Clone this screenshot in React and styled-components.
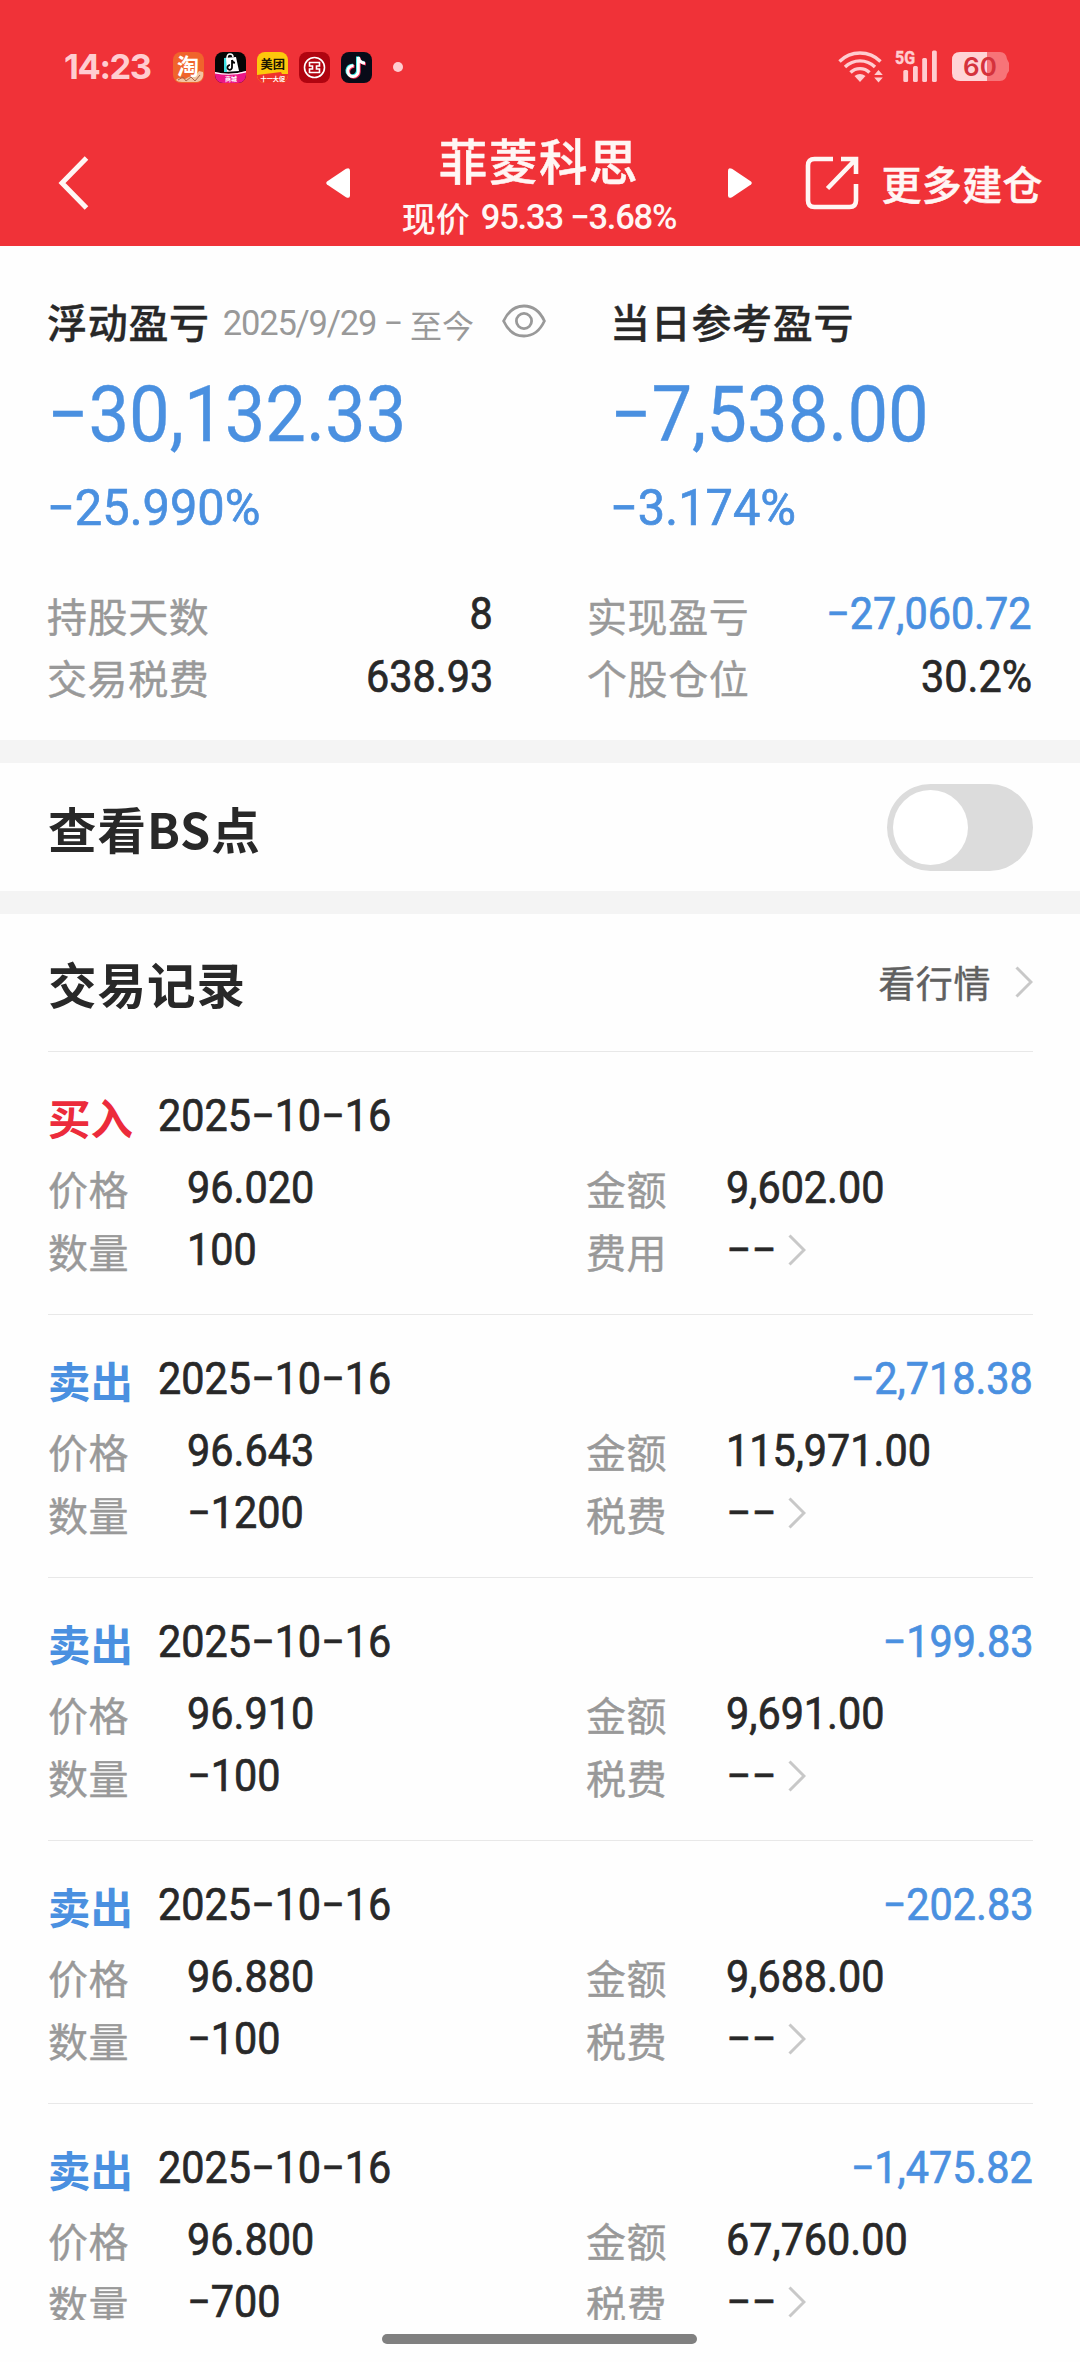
import React, { useState } from "react";
import styled, { createGlobalStyle } from "styled-components";

const GlobalStyle = createGlobalStyle`
  * {
    box-sizing: border-box;
  }
  body {
    margin: 0;
    background: #fefefe;
    font-family: "Noto Sans CJK SC", sans-serif;
    color: #282828;
  }
`;

const Screen = styled.div`
  width: 1080px;
  height: 2362px;
  overflow: hidden;
  display: flex;
  flex-direction: column;
`;

const Content = styled.div`
  height: 2320px;
  flex: none;
  overflow: hidden;
`;

const Num = styled.span`
  display: inline-block;
  font-family: Roboto, "Noto Sans CJK SC", sans-serif;
  font-size: ${({ size }) => size || 44}px;
  font-weight: 400;
  line-height: 1.2;
  white-space: pre;
  color: ${({ tone }) => (tone === "blue" ? "#4a90e0" : "inherit")};
  -webkit-text-stroke: ${({ size }) => (size > 60 ? "0.3px" : "0.7px")};
  transform: scaleX(${({ squeeze }) => squeeze || 0.94});
  transform-origin: ${({ align }) => align || "left"} center;
`;

const SmallNum = styled.span`
  font-family: Roboto, "Noto Sans CJK SC", sans-serif;
  font-size: 34.5px;
  font-weight: ${({ weight }) => weight || 400};
  letter-spacing: -1.2px;
  line-height: 1.2;
  white-space: pre;
`;

/* ---------- header ---------- */

const Header = styled.header`
  height: 246px;
  background: #f03238;
  color: #fff6f4;
`;

const StatusBar = styled.div`
  height: 120px;
  padding: 14px 71px 0 64px;
  display: flex;
  align-items: center;
  color: #ffcdd0;
`;

const Clock = styled.span`
  width: 109px;
  font-family: Inter, sans-serif;
  font-size: 34.5px;
  font-weight: 650;
  letter-spacing: -1.4px;
  line-height: 1.2;
`;

const AppIcons = styled.div`
  display: flex;
  gap: 11px;
`;

const AppIcon = styled.svg`
  width: 31px;
  height: 31px;
  display: block;
`;

const Dot = styled.span`
  width: 10px;
  height: 10px;
  margin-left: 21px;
  border-radius: 50%;
  background: #ffcdd0;
`;

const SignalIcons = styled.svg`
  width: 171px;
  height: 40px;
  margin-left: auto;
`;

const NavBar = styled.div`
  height: 126px;
  padding: 0 37px 0 58px;
  display: grid;
  grid-template-columns: 268px 426px 1fr;
  align-items: center;
`;

const StockSwitch = styled.div`
  display: flex;
  align-items: center;
  justify-content: space-between;
`;

const StockTitle = styled.div`
  padding-top: 4px;
  display: flex;
  flex-direction: column;
  align-items: center;
  gap: 15px;
`;

const StockName = styled.div`
  font-size: 48.5px;
  font-weight: 500;
  letter-spacing: 1.6px;
  line-height: 50px;
  -webkit-text-stroke: 0.5px;
`;

const StockPrice = styled.div`
  height: 38px;
  display: flex;
  align-items: center;
  gap: 11px;
`;

const PriceLabel = styled.span`
  font-size: 34px;
  font-weight: 500;
  line-height: 38px;
`;

const MoreButton = styled.div`
  display: flex;
  align-items: center;
  justify-content: flex-end;
  gap: 22px;
  font-size: 40px;
  font-weight: 500;
  letter-spacing: 0.4px;
  line-height: 1.2;
  -webkit-text-stroke: 0.5px;
`;

/* ---------- summary ---------- */

const Summary = styled.section`
  height: 494px;
  padding: 53px 48px 0 47px;
`;

const ProfitGrid = styled.div`
  display: grid;
  grid-template-columns: 563px 1fr;
`;

const ProfitHead = styled.div`
  height: 44px;
  display: flex;
  align-items: center;
  svg {
    margin-left: 28px;
  }
`;

const ProfitTitle = styled.span`
  font-size: 40px;
  font-weight: 500;
  letter-spacing: 0.7px;
  line-height: 44px;
  -webkit-text-stroke: 0.3px;
`;

const Period = styled.span`
  display: flex;
  align-items: center;
  gap: 8px;
  margin-left: 13px;
  color: #999;
  font-size: 32px;
  line-height: 44px;
  padding-top: 6px;
`;

const PeriodEnd = styled.span`
  line-height: 40px;
`;

const Amount = styled.div`
  height: 80px;
  margin-top: 32px;
  display: flex;
  align-items: center;
`;

const Percent = styled.div`
  height: 60px;
  margin-top: 23px;
  display: flex;
  align-items: center;
`;

const StatGrid = styled.div`
  margin-top: 45.5px;
  display: grid;
  grid-template-columns: 446px 445px;
  grid-auto-rows: 62.5px;
  justify-content: space-between;
`;

const Stat = styled.div`
  display: flex;
  align-items: center;
  justify-content: space-between;
`;

const Label = styled.span`
  font-size: 40px;
  letter-spacing: 0.6px;
  line-height: 1.2;
  color: #999;
  -webkit-text-stroke: 0.4px;
`;

/* ---------- switch row ---------- */

const Band = styled.div`
  height: 23px;
  background: #f4f4f4;
`;

const SwitchRow = styled.section`
  height: 128px;
  padding: 0 47px 0 48px;
  display: flex;
  align-items: center;
  justify-content: space-between;
`;

const SectionTitle = styled.h2`
  margin: 0;
  padding-top: 2px;
  font-size: 48.5px;
  font-weight: 700;
  letter-spacing: 1px;
  line-height: 1.2;
`;

const Toggle = styled.button`
  width: 146px;
  height: 87px;
  padding: 6px;
  border: 0;
  border-radius: 44px;
  background: ${({ $on }) => ($on ? "#f03238" : "#dcdcdc")};
  display: flex;
  align-items: center;
  justify-content: ${({ $on }) => ($on ? "flex-end" : "flex-start")};
`;

const Knob = styled.span`
  width: 75px;
  height: 75px;
  border-radius: 50%;
  background: #fff;
`;

/* ---------- records ---------- */

const Records = styled.section`
  padding: 0 47px 0 48px;
`;

const RecordsHead = styled.div`
  height: 137px;
  display: flex;
  align-items: center;
  justify-content: space-between;
`;

const QuoteLink = styled.div`
  display: flex;
  align-items: center;
  gap: 24px;
  font-size: 37px;
  letter-spacing: 0.6px;
  line-height: 1.2;
  color: #606060;
  -webkit-text-stroke: 0.4px;
`;

const Record = styled.article`
  height: 263px;
  padding-top: 41px;
  border-top: 1px solid #e8e8e8;
`;

const RecordHead = styled.div`
  height: 46px;
  display: flex;
  align-items: center;
  margin-bottom: 17.75px;
`;

const Side = styled.span`
  width: 110px;
  font-size: 42.5px;
  font-weight: 700;
  line-height: 1.2;
  color: ${({ $buy }) => ($buy ? "#ec2b3b" : "#4a90e0")};
`;

const Profit = styled.div`
  margin-left: auto;
`;

const RecordGrid = styled.div`
  display: grid;
  grid-template-columns: 139px 399px 140px 1fr;
  grid-auto-rows: 62.5px;
  align-items: center;
`;

const Fee = styled.div`
  display: flex;
  align-items: center;
  gap: 12px;
`;

const HomeBar = styled.div`
  width: 315px;
  height: 10px;
  margin: 14px 0 0 382px;
  border-radius: 5px;
  background: #808080;
`;

const Chevron = () => (
  <svg width="18" height="32" viewBox="0 0 18 32" fill="none" stroke="#c8c8c8" strokeWidth="3">
    <path d="M1.5 1.5 16 16 1.5 30.5" />
  </svg>
);

const Eye = () => (
  <svg width="44" height="34" viewBox="0 0 44 34" fill="none" stroke="#999" strokeWidth="2.8">
    <path d="M1.6 17C6 7.500 13 2 22 2s16 5.500 20.400 15C38 26.500 31 32 22 32S6 26.500 1.600 17Z" />
    <circle cx="22" cy="17" r="7.600" />
  </svg>
);

const note = "M17.300 5v14.200a5.300 5.300 0 1 1-4.700-5.300M17.300 5c.3 3.500 3 6 6.700 6.200";

const Apps = () => (
  <AppIcons>
    <AppIcon viewBox="0 0 31 31">
      <rect width="31" height="31" rx="8" fill="#f0642c" />
      <path d="M3 28c4-4 8 1 11-2s8 0 12-7l4 1c1 5-1 9-6 10H9c-3 0-5-1-6-2Z" fill="#f3c3a2" />
      <path d="M5 28l5-3 3 4 5-4 4 4 5-6" stroke="#a7684c" fill="none" />
      <text x="4" y="21.500" fontSize="22" fontWeight="700" fill="#fff" fontFamily="Noto Sans CJK SC">淘</text>
    </AppIcon>
    <AppIcon viewBox="0 0 31 31">
      <rect width="31" height="31" rx="8" fill="#050505" />
      <path d="M0 20q15 4 31-1v4a8 8 0 0 1-8 8H8a8 8 0 0 1-8-8Z" fill="#ec1687" />
      <path d="M0 20q15 4 31-1v1.500q-15 4-31 1Z" fill="#fff" />
      <path d="M9 6l12-1 3 14-14 1Z" fill="#fff" />
      <path d="M9 6l2 0 1 14-3 0Z" fill="#3de3e6" />
      <path d="M12 6q0-4 3-4t3 3" fill="none" stroke="#fff" strokeWidth="1.500" />
      <path d="M17 8v7.500a2.300 2.300 0 1 1-2-2.300M17 8q.5 2.500 3 2.800" fill="none" stroke="#050505" strokeWidth="1.800" />
      <text x="10" y="29" fontSize="6" fontWeight="700" fill="#fff" fontFamily="Noto Sans CJK SC">商城</text>
    </AppIcon>
    <AppIcon viewBox="0 0 31 31">
      <rect width="31" height="31" rx="8" fill="#fdc80c" />
      <path d="M0 23l24-3 1 2h6v1a8 8 0 0 1-8 8H8a8 8 0 0 1-8-8Z" fill="#f0322b" />
      <text x="3.500" y="17" fontSize="12.300" fontWeight="700" fill="#1b1600" fontFamily="Noto Sans CJK SC">美团</text>
      <text x="3.500" y="29" fontSize="6.200" fontWeight="700" fill="#fff" fontFamily="Noto Sans CJK SC">十一大促</text>
    </AppIcon>
    <AppIcon viewBox="0 0 31 31">
      <rect width="31" height="31" rx="8" fill="#b00410" />
      <circle cx="15.500" cy="15.500" r="10" fill="none" stroke="#fff" strokeWidth="1.600" />
      <path
        d="M10.500 10.500h10v3.500h-3v3h3v3.500h-10V17h3v-3h-3Z"
        fill="none"
        stroke="#fff"
        strokeWidth="1.600"
      />
    </AppIcon>
    <AppIcon viewBox="0 0 31 31">
      <rect width="31" height="31" rx="8" fill="#080b18" />
      <g fill="none" strokeWidth="3">
        <path d={note} stroke="#27e5e3" transform="translate(-.8 -.6)" />
        <path d={note} stroke="#f5315b" transform="translate(.9 .7)" />
        <path d={note} stroke="#fff" />
      </g>
    </AppIcon>
  </AppIcons>
);

/* wifi, mobile signal and battery */
const Signals = () => (
  <SignalIcons viewBox="838 47 171 40">
    <g fill="none" stroke="#ffcdd0" strokeWidth="3.400">
      <path d="M839.500 61.500a29 29 0 0 1 41 0" />
      <path d="M845 67a21.500 21.500 0 0 1 30 0" />
      <path d="M850.500 72.500a13.500 13.500 0 0 1 19 0" />
    </g>
    <g fill="#ffcdd0">
      <path d="M854.500 76q5.500-4 11 0L860 82Z" />
      <path d="M878.500 70l4.300 5h-8.600ZM878.500 82.500l4.300-5h-8.600Z" />
      <text
        x="895"
        y="63.500"
        fontSize="18.500"
        fontWeight="700"
        fontFamily="Roboto"
        stroke="#ffcdd0"
        strokeWidth="0.500"
        textLength="20"
        lengthAdjust="spacingAndGlyphs"
      >
        5G
      </text>
      <rect x="903.300" y="70" width="4.800" height="12" rx="1.500" />
      <rect x="913" y="66" width="4.800" height="16" rx="1.500" />
      <rect x="922.200" y="58" width="4.800" height="24" rx="1.500" />
      <rect x="932" y="50.500" width="4.800" height="31.500" rx="1.500" />
    </g>
    <path d="M987 52h13q6 0 7 7l2 4v8l-2 3q-1 7-7 7h-13Z" fill="#f77478" />
    <path d="M987 52v29h-27q-8 0-8-8V60q0-8 8-8Z" fill="#ffd4d6" />
    <text x="963" y="76" fontSize="26" fontWeight="600" fontFamily="Inter" fill="#d5323c" textLength="34">60</text>
  </SignalIcons>
);

const stats = [
  { label: "持股天数", value: "8" },
  { label: "实现盈亏", value: "−27,060.72", tone: "blue" },
  { label: "交易税费", value: "638.93" },
  { label: "个股仓位", value: "30.2%" },
];

const records = [
  { buy: true, price: "96.020", amount: "9,602.00", count: "100" },
  { price: "96.643", amount: "115,971.00", count: "−1200", profit: "−2,718.38" },
  { price: "96.910", amount: "9,691.00", count: "−100", profit: "−199.83" },
  { price: "96.880", amount: "9,688.00", count: "−100", profit: "−202.83" },
  { price: "96.800", amount: "67,760.00", count: "−700", profit: "−1,475.82" },
];

const App = () => {
  const [showPoints, setShowPoints] = useState(false);

  return (
    <Screen>
      <GlobalStyle />
      <Content>
        <Header>
          <StatusBar>
            <Clock>14:23</Clock>
            <Apps />
            <Dot />
            <Signals />
          </StatusBar>
          <NavBar>
            <svg width="32" height="54" viewBox="0 0 32 54" fill="none" stroke="#fff6f4" strokeWidth="5">
              <path d="M28.500 2 4 27l24.500 25" />
            </svg>
            <StockSwitch>
              <svg width="24" height="30" viewBox="0 0 24 30" fill="#fff">
                <path d="M1 13.500 20 .8q4-2 4 2v24.400q0 4-4 2L1 16.500q-1.500-1.500 0-3Z" />
              </svg>
              <StockTitle>
                <StockName>菲菱科思</StockName>
                <StockPrice>
                  <PriceLabel>现价</PriceLabel>
                  <SmallNum weight={500}>95.33 −3.68%</SmallNum>
                </StockPrice>
              </StockTitle>
              <svg width="24" height="30" viewBox="0 0 24 30" fill="#fff">
                <path d="M23 13.500 4 .8q-4-2-4 2v24.400q0 4 4 2L23 16.500q1.500-1.500 0-3Z" />
              </svg>
            </StockSwitch>
            <MoreButton>
              <svg width="54" height="54" viewBox="0 0 54 54" fill="none" stroke="#fff6f4" strokeWidth="4.600">
                <path d="M28 3H9.500Q3 3 3 9.500v35Q3 51 9.500 51h35q6.500 0 6.500-6.500V28" />
                <path d="M36 3h15v15M50 4 22.500 32.500" />
              </svg>
              更多建仓
            </MoreButton>
          </NavBar>
        </Header>

        <Summary>
          <ProfitGrid>
            <div>
              <ProfitHead>
                <ProfitTitle>浮动盈亏</ProfitTitle>
                <Period>
                  <SmallNum>2025/9/29 −</SmallNum>
                  <PeriodEnd>至今</PeriodEnd>
                </Period>
                <Eye />
              </ProfitHead>
              <Amount>
                <Num size={77} tone="blue">−30,132.33</Num>
              </Amount>
              <Percent>
                <Num size={50} squeeze={0.975} tone="blue">−25.990%</Num>
              </Percent>
            </div>
            <div>
              <ProfitHead>
                <ProfitTitle>当日参考盈亏</ProfitTitle>
              </ProfitHead>
              <Amount>
                <Num size={77} tone="blue">−7,538.00</Num>
              </Amount>
              <Percent>
                <Num size={50} squeeze={0.975} tone="blue">−3.174%</Num>
              </Percent>
            </div>
          </ProfitGrid>
          <StatGrid>
            {stats.map((s) => (
              <Stat key={s.label}>
                <Label>{s.label}</Label>
                <Num align="right" tone={s.tone}>{s.value}</Num>
              </Stat>
            ))}
          </StatGrid>
        </Summary>

        <Band />
        <SwitchRow>
          <SectionTitle>查看BS点</SectionTitle>
          <Toggle $on={showPoints} onClick={() => setShowPoints(!showPoints)}>
            <Knob />
          </Toggle>
        </SwitchRow>
        <Band />

        <Records>
          <RecordsHead>
            <SectionTitle>交易记录</SectionTitle>
            <QuoteLink>
              看行情
              <Chevron />
            </QuoteLink>
          </RecordsHead>
          {records.map((r, i) => (
            <Record key={i}>
              <RecordHead>
                <Side $buy={r.buy}>{r.buy ? "买入" : "卖出"}</Side>
                <Num>2025−10−16</Num>
                {r.profit && (
                  <Profit>
                    <Num align="right" tone="blue">{r.profit}</Num>
                  </Profit>
                )}
              </RecordHead>
              <RecordGrid>
                <Label>价格</Label>
                <Num>{r.price}</Num>
                <Label>金额</Label>
                <Num>{r.amount}</Num>
                <Label>数量</Label>
                <Num>{r.count}</Num>
                <Label>{r.buy ? "费用" : "税费"}</Label>
                <Fee>
                  <Num squeeze={1}>−−</Num>
                  <Chevron />
                </Fee>
              </RecordGrid>
            </Record>
          ))}
        </Records>
      </Content>
      <HomeBar />
    </Screen>
  );
};

export default App;
